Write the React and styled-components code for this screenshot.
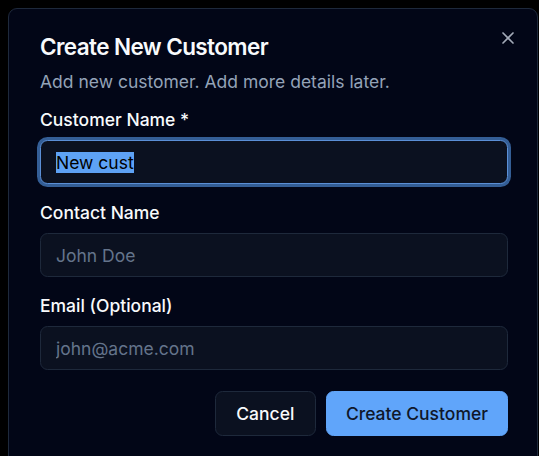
import React, { useEffect, useRef } from 'react';
import styled, { createGlobalStyle } from 'styled-components';

const GlobalStyle = createGlobalStyle`
  html, body {
    margin: 0;
    padding: 0;
    background: #000;
    font-family: Inter, "Noto Sans", sans-serif;
    -webkit-font-smoothing: antialiased;
  }
  #root {
    width: 539px;
    height: 456px;
    overflow: hidden;
  }
  input::selection {
    background: #5ea2f5;
    color: #000;
  }
`;

const Backdrop = styled.div`
  width: 539px;
  height: 456px;
  padding: 8px 0 0 8px;
  box-sizing: border-box;
  overflow: hidden;
`;

const Dialog = styled.div`
  position: relative;
  box-sizing: border-box;
  width: 530px;
  height: 480px;
  padding: 27px 29px 0 31px;
  background: #020617;
  border: 1px solid #1e293b;
  border-radius: 9px;
  display: flex;
  flex-direction: column;
`;

const CloseButton = styled.button`
  position: absolute;
  top: 19px;
  right: 19px;
  width: 20px;
  height: 20px;
  padding: 0;
  border: none;
  background: none;
  color: #a3aab8;
  display: flex;
  align-items: center;
  justify-content: center;
  cursor: pointer;
`;

const Header = styled.div`
  display: flex;
  flex-direction: column;
  gap: 10px;
`;

const Title = styled.h2`
  margin: 0;
  font-size: 22.5px;
  line-height: 22.5px;
  font-weight: 600;
  letter-spacing: -0.6px;
  color: #f8fafc;
`;

const Description = styled.p`
  margin: 0;
  font-size: 17.5px;
  line-height: 25px;
  color: #94a3b8;
`;

const Form = styled.form`
  display: flex;
  flex-direction: column;
  gap: 19px;
  margin-top: 16.5px;
`;

const Field = styled.div`
  display: flex;
  flex-direction: column;
  gap: 10px;
`;

const Label = styled.label`
  font-size: 17.5px;
  line-height: 20px;
  font-weight: 500;
  color: #f8fafc;
`;

const Input = styled.input`
  box-sizing: border-box;
  width: 100%;
  height: 44px;
  padding: 0 15px;
  font-family: Inter, "Noto Sans", sans-serif;
  font-size: 17.5px;
  background: #0b1120;
  border: 1px solid ${p => (p.$focused ? '#5b8fd6' : '#1e293b')};
  border-radius: 7.5px;
  outline: none;
  box-shadow: ${p => (p.$focused ? '0 0 0 3px #345e96' : 'none')};
  color: #f8fafc;

  &::placeholder {
    color: #64748b;
  }
`;

const Footer = styled.div`
  display: flex;
  justify-content: flex-end;
  gap: 10px;
  margin-top: 1.5px;
`;

const Button = styled.button`
  height: 45px;
  padding: 0 ${p => (p.$primary ? '19px' : '20.5px')};
  font-family: Inter, "Noto Sans", sans-serif;
  font-size: 17.5px;
  font-weight: 500;
  border-radius: 7.5px;
  cursor: pointer;
  border: 1px solid ${p => (p.$primary ? '#60a5fa' : '#1e293b')};
  background: ${p => (p.$primary ? '#60a5fa' : '#0b1120')};
  color: ${p => (p.$primary ? '#0f172a' : '#f8fafc')};
`;

const XIcon = () => (
  <svg width="20" height="20" viewBox="0 0 24 24" fill="none" stroke="currentColor" strokeWidth="2" strokeLinecap="round" strokeLinejoin="round">
    <path d="M18 6 6 18" />
    <path d="m6 6 12 12" />
  </svg>
);

export default function App() {
  const nameRef = useRef(null);

  useEffect(() => {
    const el = nameRef.current;
    if (el) {
      el.focus();
      el.setSelectionRange(0, el.value.length);
    }
  }, []);

  return (
    <>
      <GlobalStyle />
      <Backdrop>
        <Dialog>
          <CloseButton aria-label="Close">
            <XIcon />
          </CloseButton>
          <Header>
            <Title>Create New Customer</Title>
            <Description>Add new customer. Add more details later.</Description>
          </Header>
          <Form onSubmit={e => e.preventDefault()}>
            <Field>
              <Label>Customer Name *</Label>
              <Input ref={nameRef} $focused defaultValue="New cust" />
            </Field>
            <Field>
              <Label>Contact Name</Label>
              <Input placeholder="John Doe" />
            </Field>
            <Field>
              <Label>Email (Optional)</Label>
              <Input placeholder="john@acme.com" />
            </Field>
            <Footer>
              <Button type="button">Cancel</Button>
              <Button type="submit" $primary>Create Customer</Button>
            </Footer>
          </Form>
        </Dialog>
      </Backdrop>
    </>
  );
}
